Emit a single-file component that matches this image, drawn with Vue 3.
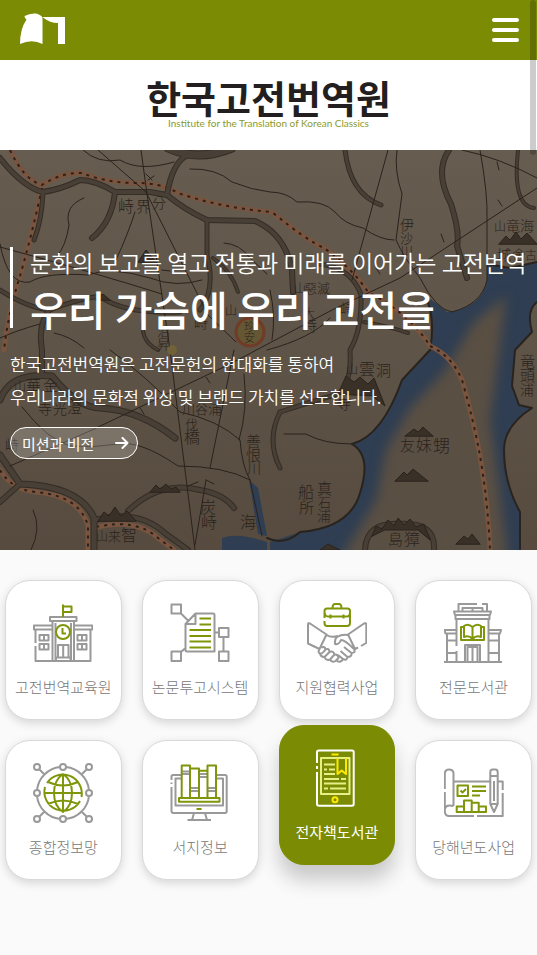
<script setup>
const bands = [
  { d: 'M0 8 Q22 36 42 42 Q60 40 80 30 Q95 30 115 42 L150 42 L167 45 Q185 60 207 70 L255 71 Q285 84 292 120 L293 142', w: 6 },
  { d: 'M207 70 L207 105 Q216 140 200 160', w: 5 },
  { d: 'M213 108 Q232 122 238 142', w: 4 },
  { d: 'M115 42 Q112 72 92 88', w: 6 },
  { d: 'M43 42 Q42 70 34 90', w: 5 },
  { d: 'M167 45 Q172 14 186 6', w: 6 },
  { d: 'M168 -2 Q198 12 232 -2', w: 9 },
  { d: 'M0 140 Q28 158 50 160 Q74 150 100 146 Q122 164 180 162', w: 5 },
  { d: 'M48 162 Q38 176 42 200 L42 222', w: 6 },
  { d: 'M345 0 Q350 44 381 55', w: 5 },
  { d: 'M449 0 Q434 22 451 54 Q460 82 457 96 L467 128', w: 6 },
  { d: 'M518 0 Q512 56 534 58', w: 4 },
  { d: 'M320 114 Q352 118 361 145 Q362 180 350 200 Q352 234 338 244 Q310 252 280 262', w: 5 },
  { d: 'M0 250 Q10 222 52 226 Q78 258 100 258 Q140 260 175 288', w: 7 },
  { d: 'M0 305 L20 334 Q80 336 94 368 L94 400', w: 7 },
  { d: 'M20 334 L0 352', w: 6 },
  { d: 'M128 361 Q160 330 200 340 Q224 344 234 358', w: 6 },
  { d: 'M95 370 Q138 358 166 384 L188 400', w: 6 },
  { d: 'M280 262 Q266 290 280 318', w: 5 },
  { d: 'M364 172 Q388 176 408 183', w: 4 },
  { d: 'M144 166 Q138 190 158 200', w: 4 },
  { d: 'M365 400 Q366 372 400 374 Q436 372 434 400', w: 6 }
]

const thin = [
  'M83 0 Q98 14 120 10 Q140 22 174 12',
  'M98 0 L146 42 L208 165 L236 192',
  'M141 0 L147 44 L170 200 L195 400',
  'M84 48 Q64 56 69 75 Q66 96 57 106',
  'M135 62 Q128 84 116 110',
  'M190 19 Q216 18 232 32 Q252 40 270 42 Q286 42 297 52 Q324 50 335 62 Q344 74 363 78 Q380 90 394 90',
  'M397 0 Q394 20 402 44 L396 90 Q404 108 420 128 Q436 160 452 162 Q482 154 487 130 L487 70 Q488 44 480 0',
  'M388 0 L352 130',
  'M0 94 Q8 136 30 132 Q46 122 88 125 Q110 116 150 128 Q176 138 202 130',
  'M0 97 Q92 122 162 144',
  'M224 93 Q240 94 250 108 L267 124',
  'M0 188 Q18 180 40 174',
  'M54 183 Q70 186 84 198',
  'M110 200 Q146 226 180 262 Q218 270 240 290 Q242 316 250 330 L262 386',
  'M22 257 Q48 290 70 296 Q94 298 118 294 Q140 290 178 316 Q224 316 250 330',
  'M10 316 L92 280 L230 214 L332 160 L400 128 L537 38',
  'M462 0 Q500 8 537 28',
  'M234 200 L210 318',
  'M244 224 Q248 260 239 290',
  'M206 330 L195 395',
  'M33 360 Q42 378 31 400',
  'M272 190 Q276 166 270 140 M267 200 Q312 188 330 168',
  'M284 284 L306 284 Q324 294 352 294',
  'M152 30 L146 24 M148 30 L154 26 M162 120 L170 121 M188 336 L198 332 M206 330 L214 334 M140 258 L144 264 M206 227 L210 233',
  'M441 84 L444 92 M498 50 L502 56 M497 12 L499 20 M376 118 L380 124'
]

const roads = [
  'M10 0 Q24 30 42 35 Q62 22 82 23 Q104 32 132 33 Q160 32 178 43 Q222 58 272 62 Q306 90 324 98 Q352 118 368 142 Q410 164 430 196',
  'M42 38 Q32 84 20 126 Q8 164 4 200',
  'M0 320 Q12 340 36 342 Q80 346 88 376 L88 400',
  'M96 377 Q136 368 158 388 L174 400',
  'M430 196 Q452 206 462 230 Q474 272 480 306 Q488 352 490 400'
]

const peaks = [
  'M499 94 L506 86 L510 90 L516 82 L521 89 L527 83 L537 94Z',
  'M405 286 L414 279 L418 282 L423 277 L433 286Z',
  'M395 331 L404 322 L407 325 L413 319 L428 331Z',
  'M456 394 L464 386 L468 389 L472 384 L480 394Z',
  'M320 400 L328 394 L334 397 L340 400Z',
  'M98 371 L104 362 L109 366 L115 357 L121 366 L127 361 L136 371Z',
  'M150 342 L156 335 L160 339 L166 334 L171 339 L176 337 L180 342Z',
  'M338 244 L346 226 L354 232 L360 227 L368 234 L374 228 L385 256 L372 246Z',
  'M372 386 L376 376 L382 379 L388 370 L394 376 L398 368 L404 375 L410 369 L416 377 L424 374 L430 390 L418 380 L385 380Z',
  'M96 150 L103 144 L110 150Z',
  'M138 112 L146 100 L156 112Z'
]

const glyphs = [
  ['峙', 118, 62, 16], ['界', 136, 62, 15], ['分', 152, 58, 14],
  ['伊', 400, 80, 14], ['沙', 400, 93, 13], ['川', 400, 106, 13],
  ['山', 494, 81, 12], ['竜', 506, 81, 14], ['海', 520, 81, 14],
  ['城', 497, 110, 14], ['舍', 512, 110, 14], ['古', 525, 110, 12],
  ['山', 294, 143, 12], ['惡', 304, 143, 13], ['滅', 317, 143, 13],
  ['峙', 340, 164, 14], ['大', 303, 168, 12], ['峙', 302, 181, 15],
  ['山', 225, 165, 12], ['峙', 194, 178, 14], ['沼', 157, 186, 13], ['昇', 157, 199, 13],
  ['山', 14, 241, 12], ['華', 26, 241, 15], ['金', 43, 241, 15],
  ['寺', 38, 264, 14], ['光', 53, 264, 14], ['澄', 67, 263, 15],
  ['峙', 5, 300, 14], ['川', 182, 264, 13], ['谷', 195, 264, 13], ['浦', 208, 264, 14],
  ['伐', 185, 279, 13], ['橋', 184, 293, 16],
  ['善', 246, 297, 15], ['恨', 246, 311, 15], ['川', 247, 324, 14],
  ['炭', 200, 363, 16], ['峙', 201, 378, 16], ['海', 240, 378, 16],
  ['山', 96, 391, 12], ['来', 108, 391, 13], ['智', 121, 391, 16],
  ['山', 346, 224, 12], ['雲', 359, 225, 16], ['洞', 376, 226, 15], ['寺', 337, 259, 14],
  ['友', 400, 301, 15], ['妹', 416, 301, 16], ['甥', 433, 302, 17],
  ['船', 298, 348, 16], ['所', 299, 363, 15], ['真', 317, 344, 15], ['石', 318, 357, 13], ['浦', 317, 371, 14],
  ['島', 388, 395, 15], ['獐', 404, 395, 16],
  ['竜', 520, 217, 15], ['頭', 520, 231, 15], ['浦', 520, 245, 14]
]

const services = [
  { label: '고전번역교육원', icon: 'school' },
  { label: '논문투고시스템', icon: 'paper' },
  { label: '지원협력사업', icon: 'hands' },
  { label: '전문도서관', icon: 'library' },
  { label: '종합정보망', icon: 'globe' },
  { label: '서지정보', icon: 'monitor' },
  { label: '전자책도서관', icon: 'ebook', active: true },
  { label: '당해년도사업', icon: 'plan' }
]

const icons = {
  school: {
    main: 'M29 18H19.5V58H41V18H33M17 14H43.5V18H17ZM19 22.5H1V26.5H19M41 22.5H59.3V26.5H41M2.5 27V40M2.5 43V58H57.5V27M22.5 20V58M38 20V58M6.5 32H15.5V37.5H6.5ZM11 32V37.5M6.5 41H15.5V46.5H6.5ZM11 41V46.5M44.5 32H53.5V37.5H44.5ZM49 32V37.5M44.5 41H53.5V46.5H44.5ZM49 41V46.5M25 54V42H35.5V54M30.2 42V54M23 58V54.5H37.5V58',
    accent: 'M30 14V1.5M30 3.5H38.5V9H30M37 29A7 7 0 1 1 23 29A7 7 0 1 1 37 29M29.5 25V30.5H33'
  },
  paper: {
    main: 'M1.5 1.5H11V10.5H1.5ZM1.5 48.5H11V58H1.5ZM49 25H58.5V34H49ZM49 48.5H58.5V58H49ZM53.5 34V48.5M11 10.5L18.5 18M11 49L15.5 45M44.5 29.5H49M25.5 10.5H43Q44.5 10.5 44.5 12V48.5H17Q15.5 48.5 15.5 47V21ZM25.5 10.5V21H15.5',
    accent: 'M29.5 15.5H41M29.5 21.5H41M19.5 27H41M19.5 33H41M19.5 38.5H41M19.5 44.5H41'
  },
  hands: {
    main: 'M19.5 31.5L3 20.5Q1 19.5 1 21.5V40.5L12.5 46ZM54 43L59.3 40V21.5Q59 19.5 57 20.5L41 31.5L48 46L51 44.5M19.5 32Q24 35 31 33M41 32Q35 31 30 34Q27.5 36 28 41Q32 42 34 37Q38 37 47 46M47 46Q49 50 44.5 50L37 44M44.5 50Q45 54 40.5 54L33.5 48M40.5 54Q40 58 36 56L31 52M36 56Q34 60 30 58M12.5 46Q10.5 49.5 13 50.5Q15.5 51 18.5 46.5Q18 43 14.5 44.5M13 50.5Q14 54.5 17.5 54L22.5 49Q22 44.5 18.5 46.5M17.5 54Q19 58 23 56.5L27.5 51.5Q26.5 47.5 22.5 49M23 56.5Q25 60 28.5 58L31.5 55Q31 51 27.5 51.5',
    accent: 'M17.5 15V8Q17.5 5.5 20 5.5H40.5Q43 5.5 43 8V20Q43 23 40 23H20Q17.5 23 17.5 20V18M25.5 5.5Q25.5 1 28 1H32Q34.5 1 34.5 5.5M17.5 9Q18 13.5 21 13.5H40Q43 13.5 43 9M23.5 11.5V15.5M36.5 11.5V15.5'
  },
  library: {
    main: 'M0 59H58M12.5 43V16H44.5V59M12.5 48V59M10 8.5H47L46 12H11ZM11.5 12V16H45.5V12M14.5 8V1H33M38 1H43V8M18.5 8V5H38.5V8M28.5 5V8M12 27H.5L1.5 30.5H12M45 27H57L56 30.5H45M3 31V59M55 31V59M3 37.5H12M3 50H12M45 37.5H55M45 50H55M21 59V42H36V59M23.5 59V44H33.5V59M28.5 44V59',
    accent: 'M28.5 24Q24 20 20 23V34Q25 32 28.5 36Q32 32 37 34V23Q33 20 28.5 24ZM28.5 24V36M20 24H17V37H40V24H37'
  },
  globe: {
    main: 'M33 4A26 26 0 0 1 56 27M56 33A26 26 0 0 1 33 56M27 56A26 26 0 0 1 4 33M4 27A26 26 0 0 1 27 4M33 4A3 3 0 1 1 27 4A3 3 0 1 1 33 4M7 30A3 3 0 1 1 1 30A3 3 0 1 1 7 30M59 30A3 3 0 1 1 53 30A3 3 0 1 1 59 30M33 56A3 3 0 1 1 27 56A3 3 0 1 1 33 56M7 4A3 3 0 1 1 1 4A3 3 0 1 1 7 4M59 4A3 3 0 1 1 53 4A3 3 0 1 1 59 4M7 56A3 3 0 1 1 1 56A3 3 0 1 1 7 56M59 56A3 3 0 1 1 53 56A3 3 0 1 1 59 56M6 6L11.5 11.5M54 6L48.5 11.5M6 54L11.5 48.5M54 54L48.5 48.5',
    accent: 'M14 20A19 19 0 0 1 48.5 34M47 38A19 19 0 0 1 12 24M11 30H49M30 11V49M30 11C18 19 18 41 30 49C42 41 42 19 30 11M15 19Q30 26 45 19M15 41Q30 34 45 41'
  },
  monitor: {
    main: 'M12 12H3Q1.5 12 1.5 13.5V17M1.5 19.5V21M1.5 24V48Q1.5 50 3.5 50H55Q56.7 50 56.7 48V13.5Q56.7 12 55 12H46M11 15.5H5.5V42.5H53V15.5H47M24 50L22 57M35 50L37 57M17.5 57H41M12 8.5H20M12 11H20M20 25H28M20 28H28M30 11H37M30 14H37M38 25H46M38 28H46',
    accent: 'M11.7 34.5V2.5H20V34.5M20 5.5H29V34.5M29 7.7H37.5V34.5M37.5 34.5V2.5H46V34.5M9 35H49.5V38.7H9ZM26.5 46H31.5'
  },
  ebook: {
    main: 'M10 15V4Q10 2.5 12 2.5H45Q46.7 2.5 46.7 4V56Q46.7 57.7 45 57.7H12Q10 57.7 10 56V24M10 18V21',
    soft: 'M14 10H42.5V46H14ZM17 16.5H28M17 21.5H20M22 21.5H28M17 26H28M17 31H32M34 31H39M17 35.5H39M17 40.5H21M23 40.5H39',
    accent: 'M24.5 6.5H31.5M30.5 10V26L34.7 22.5L39 26V10M30.5 51.7A2.5 2.5 0 1 1 25.5 51.7A2.5 2.5 0 1 1 30.5 51.7'
  },
  plan: {
    main: 'M9.5 43V10Q9 6.5 5 6.5Q.8 6.5 .8 11V26M.8 29V48Q1 53 5 53H30M33 53H58.7V30M58.7 27V18.5H54M46 18.5H9.5M.8 46Q2 41 9.5 43M46.3 41V9Q46.3 6.5 48.5 6.5H51.5Q53.7 6.5 53.7 9V41L50 49L46.3 41ZM46.3 13H53.7M50 18V38M46.3 41H53.7',
    accent: 'M13.5 22.5H24V33H13.5ZM16.5 27.5L18.5 29.5L22 26M28 23.5H42M28 28H42M28 32.5H36M12.7 49V43.5H20V49ZM20 49V37.5H27.7V49M27.7 39.7H34.7V49M34.7 43.5H42V49H20'
  }
}
</script>

<template>
  <div class="page">
    <header class="topbar">
      <a class="mark" href="#" aria-label="한국고전번역원">
        <svg viewBox="0 0 46 32" width="46" height="32" aria-hidden="true">
          <path d="M4.5 2Q10 -1 16 -.5Q21 1 22.5 3.5V30Q12 24.5 0 30Q0 15 6.5 5.5Q4.5 4.5 4.5 2Z" />
          <path d="M23 3H45V30H38V9Q30 9 23 3.5Z" />
        </svg>
      </a>
      <button class="menu" type="button" aria-label="메뉴">
        <span></span><span></span><span></span>
      </button>
    </header>

    <section class="brand">
      <h1>한국고전번역원</h1>
      <p>Institute for the Translation of Korean Classics</p>
    </section>

    <section class="hero">
      <svg class="map" viewBox="0 0 537 400" preserveAspectRatio="xMidYMid slice" aria-hidden="true">
        <defs>
          <linearGradient id="paper" x1="0" y1="0" x2="0" y2="1">
            <stop offset="0" stop-color="#665c50" />
            <stop offset="1" stop-color="#564b3e" />
          </linearGradient>
          <filter id="soft" color-interpolation-filters="sRGB"><feGaussianBlur stdDeviation="6" /></filter>
          <clipPath id="sea">
            <path d="M408 115L425 145L447 162Q482 158 487 130V114L510 118L537 112V152Q526 160 532 182L515 200L512 236L519 255L532 258Q504 276 504 300Q504 333 520 362V400H270V392L300 382Q350 378 360 343Q372 306 352 294Q382 286 402 230L430 200Q436 168 425 145Z" />
          </clipPath>
        </defs>
        <rect width="537" height="400" fill="url(#paper)" />
        <g clip-path="url(#sea)">
          <rect x="260" y="100" width="277" height="300" fill="#2f3e52" />
          <path d="M506 146L474 172L444 222L410 258L386 300L376 350L340 410H508L498 330L490 270L498 210Z" fill="#5a4f43" filter="url(#soft)" />
        </g>
        <path class="shore" d="M425 145Q436 168 430 200L402 230Q382 286 352 294Q372 306 360 343Q350 378 300 382Q284 396 267 388M537 152Q526 160 532 182L515 200L512 236L519 255L532 258Q504 276 504 300Q504 333 520 362V400M487 114L510 118L537 112" />
        <path d="M249 330L258 338L267 386L258 384Z M222 388Q238 382 267 392V400H222Z" fill="#2f3e52" />
        <g class="roads">
          <path v-for="d in roads" :key="d" :d="d" />
        </g>
        <g class="dashes">
          <path v-for="d in roads" :key="d" :d="d" />
        </g>
        <g class="bands">
          <path v-for="b in bands" :key="b.d" :d="b.d" :stroke-width="b.w" />
        </g>
        <g class="cores">
          <path v-for="b in bands" :key="b.d" :d="b.d" :stroke-width="b.w - 2" />
        </g>
        <g class="thin">
          <path v-for="d in thin" :key="d" :d="d" />
        </g>
        <g class="peaks">
          <path v-for="d in peaks" :key="d" :d="d" />
        </g>
        <circle cx="250" cy="182" r="14" fill="#655733" stroke="#713b27" stroke-width="3" />
        <circle cx="172" cy="200" r="5" fill="#716238" />
        <text x="244" y="181" font-size="11">珍</text>
        <text x="244" y="192" font-size="11">安</text>
        <text v-for="(g, i) in glyphs" :key="i" :x="g[1]" :y="g[2]" :font-size="g[3]">{{ g[0] }}</text>
      </svg>
      <div class="copy">
        <h2>
          <span class="lead">문화의 보고를 열고 전통과 미래를 이어가는 고전번역</span>
          <span class="title">우리 가슴에 우리 고전을</span>
        </h2>
        <p>한국고전번역원은 고전문헌의 현대화를 통하여<br />우리나라의 문화적 위상 및 브랜드 가치를 선도합니다.</p>
        <a class="more" href="#">
          미션과 비전
          <svg viewBox="0 0 14 12" width="14" height="12" aria-hidden="true"><path d="M1 6H12M7.5 1L12.5 6L7.5 11" /></svg>
        </a>
      </div>
    </section>

    <nav class="services" aria-label="주요 서비스">
      <a v-for="s in services" :key="s.label" href="#" class="card" :class="{ active: s.active }">
        <svg viewBox="0 0 60 60" width="60" height="60" aria-hidden="true">
          <path class="main" :d="icons[s.icon].main" />
          <path v-if="icons[s.icon].soft" class="soft" :d="icons[s.icon].soft" />
          <path class="accent" :d="icons[s.icon].accent" />
        </svg>
        <span>{{ s.label }}</span>
      </a>
    </nav>
    <div class="scroll-thumb" aria-hidden="true"></div>
  </div>
</template>

<style>
body {
  margin: 0;
  background: #fafafa;
}
</style>

<style scoped>
.page {
  position: relative;
  font-family: "Noto Sans CJK KR", sans-serif;
  color: #222;
}

.page * {
  box-sizing: border-box;
}

a {
  color: inherit;
  text-decoration: none;
}

.topbar {
  display: flex;
  align-items: center;
  justify-content: space-between;
  height: 60px;
  padding: 0 18px 0 20px;
  background: #7b8c04;
}

.mark {
  display: flex;
}

.mark svg {
  overflow: visible;
}

.mark path {
  fill: #fff;
}

.menu {
  display: flex;
  flex-direction: column;
  gap: 6px;
  width: 27px;
  padding: 0;
  border: 0;
  background: none;
}

.menu span {
  height: 4px;
  border-radius: 2px;
  background: #fff;
}

.brand {
  display: flex;
  flex-direction: column;
  align-items: center;
  height: 90px;
  padding-top: 18px;
  background: #fff;
}

.brand h1 {
  margin: 0;
  font-size: 38px;
  font-weight: 700;
  line-height: 38px;
  color: #231f20;
}

.brand p {
  margin: 0;
  font-family: Lato, sans-serif;
  font-size: 10px;
  line-height: 14px;
  color: #8a9a2c;
}

.hero {
  position: relative;
  display: flex;
  min-height: 400px;
  padding: 97px 10px 0;
  overflow: hidden;
  color: #fff;
}

.map {
  position: absolute;
  inset: 0;
  width: 100%;
  height: 100%;
}

.map path {
  stroke-linecap: round;
  stroke-linejoin: round;
}

.map text {
  fill: #2a231c;
  font-weight: 300;
}

.roads path {
  fill: none;
  stroke: #79543f;
  stroke-width: 5;
}

.map .dashes path {
  fill: none;
  stroke: #2b211a;
  stroke-width: 2;
  stroke-dasharray: 3 5;
  stroke-linecap: butt;
}

.bands path {
  fill: none;
  stroke: #352d25;
}

.cores path {
  fill: none;
  stroke: #484036;
}

.thin path,
.shore {
  fill: none;
  stroke: #2a231d;
  stroke-width: 1;
}

.shore {
  stroke-width: 2;
}

.peaks path {
  fill: #393028;
  stroke: #2a231c;
}

.copy {
  position: relative;
}

.copy h2 {
  display: flex;
  flex-direction: column;
  gap: 11px;
  margin: 0;
  padding-left: 17px;
  border-left: 3px solid #fff;
  font-weight: 400;
}

.lead {
  font-size: 23px;
  font-weight: 350;
  line-height: 30px;
  white-space: nowrap;
}

.title {
  font-size: 41px;
  font-weight: 500;
  line-height: 40px;
}

.copy p {
  margin: 19px 0 14px;
  font-size: 17px;
  font-weight: 350;
  line-height: 33px;
}

.more {
  display: flex;
  align-items: center;
  justify-content: space-between;
  width: 128px;
  height: 32px;
  padding: 0 8px 0 11px;
  border: 1px solid #fff;
  border-radius: 16px;
  background: rgba(255, 255, 255, 0.2);
  font-size: 15px;
}

.more path {
  fill: none;
  stroke: #fff;
  stroke-width: 2;
  stroke-linecap: round;
  stroke-linejoin: round;
}

.services {
  display: grid;
  grid-template-columns: repeat(4, 1fr);
  gap: 20px;
  padding: 30px 5px 75px;
}

.card {
  display: flex;
  flex-direction: column;
  align-items: center;
  gap: 12px;
  height: 140px;
  padding-top: 22px;
  border: 1px solid #d9d9d9;
  border-radius: 25px;
  background: #fff;
  box-shadow: 0 3px 10px rgba(0, 0, 0, 0.15);
  font-size: 15px;
  font-weight: 300;
  line-height: 24px;
  color: #777;
}

.card svg {
  fill: none;
  stroke-width: 2;
  stroke-linejoin: round;
}

.main {
  stroke: #999;
}

.accent {
  stroke: #7f960a;
}

.card.active {
  border-color: #7b8c04;
  background: #7b8c04;
  box-shadow: 0 15px 20px rgba(0, 0, 0, 0.2);
  color: #fff;
  font-weight: 400;
  transform: translateY(-15px);
}

.active .main {
  stroke: #fff;
}

.active .soft {
  stroke: #e7ef86;
}

.active .accent {
  stroke: #ffe800;
}

.scroll-thumb {
  position: absolute;
  top: 0;
  right: 1px;
  width: 6px;
  height: 155px;
  border-radius: 3px;
  background: rgba(0, 0, 0, 0.2);
}
</style>
